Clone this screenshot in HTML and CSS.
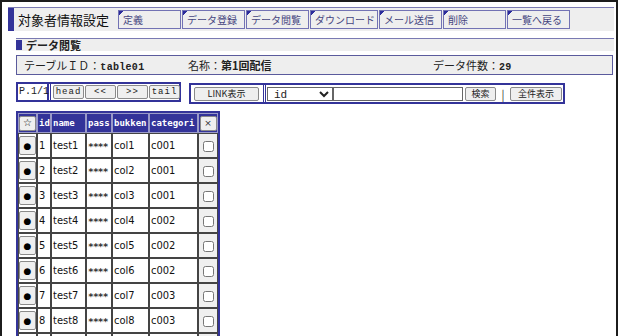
FILE: index.html
```html
<!DOCTYPE html>
<html lang="ja">
<head>
<meta charset="utf-8">
<title>対象者情報設定</title>
<link rel="stylesheet" href="styles.css">
</head>
<body>
<div class="frame">
  <header class="topbar">
    <div class="title">対象者情報設定</div>
    <nav class="tabs">
      <a class="tab" href="#">定義</a>
      <a class="tab" href="#">データ登録</a>
      <a class="tab" href="#">データ閲覧</a>
      <a class="tab" href="#">ダウンロード</a>
      <a class="tab" href="#">メール送信</a>
      <a class="tab" href="#">削除</a>
      <a class="tab" href="#">一覧へ戻る</a>
    </nav>
  </header>
  <main class="content">
    <h2 class="sec">データ閲覧</h2>
    <div class="info">
      <span>テーブルＩＤ：<b class="mono">table01</b></span>
      <span>名称：<b>第1回配信</b></span>
      <span>データ件数：<b class="mono">29</b></span>
    </div>
    <div class="tools">
      <div class="pager">
        <span class="pg">P.1/1</span>
        <span class="pbtns">
          <button class="btn mono">head</button>
          <button class="btn mono">&lt;&lt;</button>
          <button class="btn mono">&gt;&gt;</button>
          <button class="btn mono">tail</button>
        </span>
      </div>
      <form class="search">
        <span class="scell"><button type="button" class="btn link">LINK表示</button></span>
        <span class="scell find">
          <select class="sel"><option>id</option></select><input class="txt" type="text"><button type="button" class="btn kensaku">検索</button><span class="bar">|</span><button type="button" class="btn all">全件表示</button>
        </span>
      </form>
    </div>
    <table class="grid">
      <thead>
        <tr>
          <th class="c-sel"><button class="cbtn hbtn">☆</button></th>
          <th>id</th>
          <th>name</th>
          <th>pass</th>
          <th>bukken</th>
          <th>categori</th>
          <th class="c-del"><button class="cbtn hbtn x">×</button></th>
        </tr>
      </thead>
      <tbody>
        <tr><td class="c-sel"><button class="cbtn">●</button></td><td>1</td><td>test1</td><td class="pw">****</td><td>col1</td><td>c001</td><td class="c-del"><input type="checkbox"></td></tr>
        <tr><td class="c-sel"><button class="cbtn">●</button></td><td>2</td><td>test2</td><td class="pw">****</td><td>col2</td><td>c001</td><td class="c-del"><input type="checkbox"></td></tr>
        <tr><td class="c-sel"><button class="cbtn">●</button></td><td>3</td><td>test3</td><td class="pw">****</td><td>col3</td><td>c001</td><td class="c-del"><input type="checkbox"></td></tr>
        <tr><td class="c-sel"><button class="cbtn">●</button></td><td>4</td><td>test4</td><td class="pw">****</td><td>col4</td><td>c002</td><td class="c-del"><input type="checkbox"></td></tr>
        <tr><td class="c-sel"><button class="cbtn">●</button></td><td>5</td><td>test5</td><td class="pw">****</td><td>col5</td><td>c002</td><td class="c-del"><input type="checkbox"></td></tr>
        <tr><td class="c-sel"><button class="cbtn">●</button></td><td>6</td><td>test6</td><td class="pw">****</td><td>col6</td><td>c002</td><td class="c-del"><input type="checkbox"></td></tr>
        <tr><td class="c-sel"><button class="cbtn">●</button></td><td>7</td><td>test7</td><td class="pw">****</td><td>col7</td><td>c003</td><td class="c-del"><input type="checkbox"></td></tr>
        <tr><td class="c-sel"><button class="cbtn">●</button></td><td>8</td><td>test8</td><td class="pw">****</td><td>col8</td><td>c003</td><td class="c-del"><input type="checkbox"></td></tr>
        <tr class="more"><td></td><td></td><td></td><td></td><td></td><td></td><td class="c-del"></td></tr>
      </tbody>
    </table>
  </main>
</div>
</body>
</html>
```

FILE: styles.css
```css
* { box-sizing: border-box; }
html, body { margin: 0; padding: 0; background: #fff; }
body {
  font-family: "Noto Sans CJK JP", "Noto Sans", sans-serif;
  font-size: 11px;
  color: #222;
}
.frame {
  height: 336px;
  overflow: hidden;
  border: 2px solid #1c1c1c;
  border-bottom: 0;
  padding: 5px 2px 0 6px;
}
.topbar {
  display: flex;
  align-items: center;
  height: 24px;
  border-top: 1px solid #7a7ab2;
  background: #eeeeee;
}
.title {
  width: 110px;
  height: 100%;
  border-left: 6px solid #333399;
  padding-left: 4px;
  font-size: 13px;
  line-height: 23px;
  color: #111;
}
.tabs { display: flex; gap: 1px; }
.tab {
  min-width: 63px;
  height: 19px;
  padding: 0 2px 0 4px;
  border: 1px solid #7272b4;
  background: linear-gradient(135deg, #2b2b9c 3px, transparent 3px) no-repeat, #eeeeee;
  color: #45457f;
  font-size: 10px;
  line-height: 17px;
  text-decoration: none;
  white-space: nowrap;
}
.content { padding: 7px 0 0 8px; }
.sec {
  margin: 0;
  height: 13px;
  border-top: 1px solid #7a7ab2;
  background: #eeeeee;
  display: flex;
  align-items: center;
  gap: 4px;
  font-size: 11px;
  font-weight: bold;
  line-height: 12px;
}
.sec::before {
  content: "";
  width: 6px;
  height: 10px;
  background: #333399;
}
.info {
  margin: 4px 1px 0 0;
  height: 20px;
  border: 1px solid #5a5a9c;
  background: #eeeeee;
  display: grid;
  grid-template-columns: 164px 245px auto;
  align-items: center;
  padding-left: 7px;
  font-size: 11px;
  color: #222;
}
.info b { font-weight: bold; }
.mono { font-family: "Liberation Mono", "DejaVu Sans Mono", monospace; }
.info .mono { font-size: 10px; letter-spacing: 0.3px; }
.tools {
  margin-top: 7px;
  display: flex;
  gap: 8px;
  align-items: flex-start;
}
.pager {
  display: flex;
  height: 20px;
  width: 165px;
  border: 2px solid #333399;
}
.pg {
  width: 31px;
  border-right: 2px solid #333399;
  padding-left: 1px;
  font-family: "Liberation Mono", monospace;
  font-size: 10px;
  line-height: 16px;
}
.pbtns {
  display: flex;
  gap: 1px;
  align-items: center;
  padding-left: 2px;
  border-left: 1px solid #333399;
  margin-left: 1px;
}
.btn {
  height: 14px;
  width: 31px;
  padding: 0;
  border: 1px solid #8a8a8a;
  border-radius: 2px;
  background: #efefef;
  color: #222;
  font-size: 9px;
  line-height: 12px;
  font-family: "Noto Sans CJK JP", sans-serif;
}
.btn.mono { font-family: "Liberation Mono", monospace; font-size: 9px; letter-spacing: 1px; }
.search {
  margin: 1px 0 0;
  display: flex;
  height: 21px;
  width: 376px;
  border: 2px solid #333399;
}
.scell {
  display: flex;
  align-items: center;
  border-right: 1px solid #333399;
}
.scell:first-child { width: 73px; padding-left: 3px; margin-right: 1px; }
.scell.find { border-right: 0; border-left: 1px solid #333399; padding-left: 1px; flex: 1; }
.btn.link { width: 65px; font-size: 9px; }
.sel {
  width: 66px;
  height: 14px;
  border: 1px solid #666;
  border-radius: 0;
  background: #fff;
  font-size: 11px;
  padding: 0 0 0 2px;
  font-family: "Liberation Mono", monospace;
  color: #222;
}
.txt {
  width: 130px;
  height: 14px;
  border: 1px solid #666;
  border-radius: 0;
  padding: 0;
  margin: 0;
}
.btn.kensaku { width: 31px; margin-left: 2px; }
.bar { width: 14px; text-align: center; font-size: 11px; color: #333; }
.btn.all { width: 52px; }
.grid {
  margin-top: 7px;
  border-collapse: separate;
  border-spacing: 0;
  border: 2px solid #333399;
  border-bottom: 0;
  table-layout: fixed;
  width: 204px;
}
.grid th, .grid td {
  padding: 0 0 0 1px;
  text-align: left;
  white-space: nowrap;
  overflow: hidden;
}
.grid th {
  height: 20px;
  background: #333399;
  color: #fff;
  font-family: "DejaVu Sans Mono", monospace;
  font-weight: bold;
  font-size: 9px;
  border: 1px solid #9a9ac8;
}
.grid td {
  height: 25px;
  border: 1px solid #444;
  font-family: "Liberation Sans Narrow", "DejaVu Sans Condensed", "Liberation Sans", sans-serif;
  font-size: 11px;
  color: #111;
}
.grid th:nth-child(1), .grid td:nth-child(1) { width: 19px; }
.grid th:nth-child(2), .grid td:nth-child(2) { width: 14px; }
.grid th:nth-child(3), .grid td:nth-child(3) { width: 35px; }
.grid th:nth-child(4), .grid td:nth-child(4) { width: 26px; }
.grid th:nth-child(5), .grid td:nth-child(5) { width: 37px; }
.grid th:nth-child(6), .grid td:nth-child(6) { width: 49px; }
.grid th:nth-child(7), .grid td:nth-child(7) { width: 20px; }
.grid .c-sel { padding: 0; text-align: center; }
.grid .c-del { padding: 0; text-align: center; }
.grid td.c-del { background: #efefef; }
.grid th.c-sel, .grid th.c-del { background: #333399; }
.cbtn {
  width: 17px;
  height: 19px;
  padding: 0;
  border: 1px solid #8a8a8a;
  border-radius: 2px;
  background: #efefef;
  color: #000;
  font-size: 9px;
  line-height: 16px;
  font-family: "DejaVu Sans", sans-serif;
  vertical-align: middle;
}
.hbtn { height: 15px; line-height: 12px; font-size: 10px; }
.hbtn.x { font-size: 9px; color: #333; }
.grid td.pw {
  font-family: "DejaVu Sans Mono", monospace;
  font-size: 9.5px;
  font-weight: bold;
  letter-spacing: -0.8px;
  padding-top: 2px;
  color: #333;
}
.grid input[type="checkbox"] {
  width: 11px;
  height: 11px;
  margin: 0;
  vertical-align: middle;
}
```
